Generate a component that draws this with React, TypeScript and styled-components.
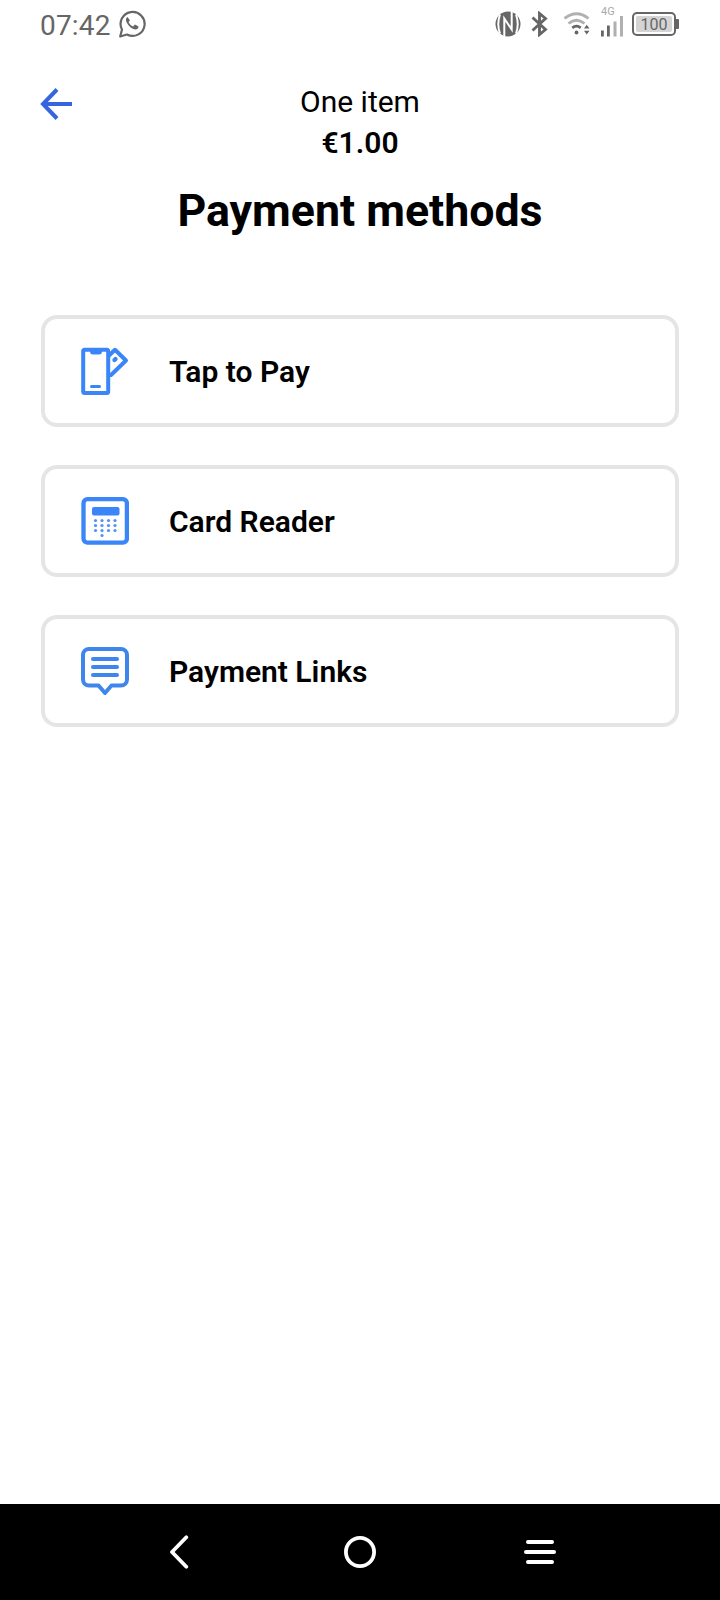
import React from "react";
import styled, { createGlobalStyle } from "styled-components";

const GlobalStyle = createGlobalStyle`
  * { box-sizing: border-box; }
  body { margin: 0; background: #fff; font-family: Roboto, "Liberation Sans", sans-serif; }
`;

const Screen = styled.div`
  width: 720px;
  height: 1600px;
  display: flex;
  flex-direction: column;
  background: #fff;
  color: #000;
`;

const StatusBar = styled.div`
  height: 48px;
  flex: none;
  display: flex;
  justify-content: space-between;
  padding: 0 41px 0 40px;
  color: #666;
`;

const StatusGroup = styled.div`
  display: flex;
  align-items: center;
`;

const Clock = styled.span`
  font-size: 28px;
  line-height: 48px;
  padding-top: 4px;
  width: 77px;
  letter-spacing: 0.2px;
`;

const Glyph = styled.svg<{ $gap?: number }>`
  display: block;
  flex: none;
  margin-left: ${(p) => p.$gap ?? 0}px;
`;

const Signal = styled.div`
  display: flex;
  flex-direction: column;
  align-self: flex-start;
  margin-left: 9px;
  width: 24px;
  color: #aaa;
  padding-top: 7px;
`;

const NetworkLabel = styled.span`
  height: 9px;
  font-size: 11px;
  line-height: 10px;
`;

const Battery = styled.div`
  display: flex;
  align-items: center;
  margin-left: 7px;
  &::after {
    content: "";
    width: 3px;
    height: 10px;
    background: #666;
    border-radius: 0 1px 1px 0;
  }
`;

const BatteryBody = styled.div`
  width: 44px;
  height: 24px;
  border: 2px solid #666;
  border-radius: 5px;
  padding: 2px;
`;

const BatteryLevel = styled.div`
  height: 16px;
  border-radius: 2px;
  background: #d4d4d4;
  font-size: 16px;
  line-height: 17px;
  text-align: center;
`;

const Header = styled.header`
  display: grid;
  grid-template-columns: 120px 1fr 120px;
  padding-top: 34px;
`;

const BackButton = styled.button`
  border: 0;
  background: none;
  padding: 5px 0 0 40px;
  align-self: start;
`;

const Summary = styled.div`
  text-align: center;
  font-size: 30px;
`;

const ItemCount = styled.div`
  font-weight: 400;
  height: 41px;
  line-height: 40px;
`;

const Amount = styled.div`
  font-weight: 600;
  line-height: 40px;
`;

const Title = styled.h1`
  margin: 22px 0 0;
  text-align: center;
  font-size: 44.700px;
  line-height: 52px;
  font-weight: 700;
`;

const Methods = styled.main`
  flex: 1;
  display: flex;
  flex-direction: column;
  gap: 38px;
  padding: 78px 41px 0;
`;

const MethodCard = styled.button`
  height: 112px;
  flex: none;
  display: flex;
  align-items: center;
  gap: 40px;
  padding: 0 36px;
  border: 4px solid #e5e5e5;
  border-radius: 16px;
  background: #fff;
  color: #000;
  font: 600 30px/40px Roboto, "Liberation Sans", sans-serif;
`;

const MethodLabel = styled.span`
  padding-top: 2px;
`;

const NavBar = styled.nav`
  height: 96px;
  flex: none;
  display: grid;
  grid-template-columns: repeat(3, 180px);
  justify-content: center;
  justify-items: center;
  align-items: center;
  background: #000;
`;

const TapIcon = () => (
  <Glyph width="48" height="48" viewBox="0 0 48 48" fill="none" stroke="#3a86f8" strokeWidth="4">
    <rect x="2.200" y="2.800" width="25" height="43.200" rx="1.5" />
    <path d="M9 3h12v1.500a3 3 0 0 1-3 3h-6a3 3 0 0 1-3-3z" fill="#3a86f8" stroke="none" />
    <path d="M10.500 39.500h8" strokeWidth="3" strokeLinecap="round" />
    <path d="M27 9.5L34 2.8L45 13.5L30 28H27" strokeLinejoin="round" />
    <path d="M33.5 13l1-1" strokeWidth="4.4" strokeLinecap="round" />
  </Glyph>
);

const dots = [0, 1, 2].flatMap((r) => [0, 1, 2, 3].map((c) => [14.500 + c * 6.5, 23.5 + r * 5]));

const ReaderIcon = () => (
  <Glyph width="48" height="48" viewBox="0 0 48 48" fill="#3a86f8">
    <rect x="2.500" y="2.200" width="43.400" height="43.400" rx="4" fill="none" stroke="#3a86f8" strokeWidth="4.300" />
    <rect x="11" y="10" width="27.500" height="8.5" rx="2" />
    {[...dots, [21, 38.5]].map(([x, y]) => (
      <circle key={`${x}-${y}`} cx={x} cy={y} r="1.6" opacity="0.9" />
    ))}
  </Glyph>
);

const LinksIcon = () => (
  <Glyph width="48" height="48" viewBox="0 0 48 48" fill="none" stroke="#3f86ec" strokeWidth="4" strokeLinecap="round" strokeLinejoin="round">
    <path d="M8 2h32a6 6 0 0 1 6 6v24.500a6 6 0 0 1-6 6h-9.500L24 46l-6.500-7.500H8a6 6 0 0 1-6-6V8a6 6 0 0 1 6-6z" />
    <path d="M12 12h24M12 20h24M12 28h24" />
  </Glyph>
);

const methods = [
  { label: "Tap to Pay", Icon: TapIcon },
  { label: "Card Reader", Icon: ReaderIcon },
  { label: "Payment Links", Icon: LinksIcon },
];

export default function App() {
  return (
    <Screen>
      <GlobalStyle />
      <StatusBar>
        <StatusGroup>
          <Clock>07:42</Clock>
          <Glyph $gap={1} width="28" height="30" viewBox="0 0 28 30" fill="none" stroke="#666" strokeWidth="2.2">
            <path d="M2.200 27.500l1.800-7A12 12 0 1 1 9 25.500z" strokeLinejoin="round" />
            <path d="M9.500 8c-2 1-2 3.500-.5 6 2 3.500 5 6 8 6.500 2 .2 3.500-1 3.500-3l-3.500-2-2 2c-2-1-3.500-2.500-4.500-4.500l1.500-1.500z" fill="#666" stroke="none" />
          </Glyph>
        </StatusGroup>
        <StatusGroup>
          <Glyph width="26" height="26" viewBox="0 0 26 26">
            <circle cx="13" cy="13" r="12.500" fill="#666" />
            <path d="M5 3.500q-3.500 9.500 0 19M9.300 25V7.500L16.700 18.500V1M21 3.500q3.500 9.500 0 19" fill="none" stroke="#fff" strokeWidth="2" />
          </Glyph>
          <Glyph $gap={10} width="18" height="26" viewBox="0 0 18 26" fill="none" stroke="#666" strokeWidth="2.900">
            <path d="M1.500 6.500l13 12L8.500 23.500V2.500l6 5-13 12" />
          </Glyph>
          <Glyph $gap={15} width="28" height="26" viewBox="0 0 28 26" fill="none" strokeWidth="2.800">
            <path d="M0.500 7.500Q12.500 -2 24.500 7.500M4.500 12.500Q12.500 6 20.500 12.500" stroke="#b0b0b0" />
            <path d="M8.300 16.800Q12.500 13.500 16.700 16.800" stroke="#666" />
            <path d="M20 17.500h5.500l-2.750-3.800zM20 19.700h5.500l-2.750 3.800z" fill="#666" />
            <circle cx="12.500" cy="21.500" r="1.900" fill="#666" />
          </Glyph>
          <Signal>
            <NetworkLabel>4G</NetworkLabel>
            <svg width="24" height="22" viewBox="0 0 24 22">
              <path d="M0 14.500h2.800v6H0zM6 9.500h2.800v11H6z" fill="#666" />
              <path d="M12.500 5.500h3v15h-3zM19 0h3v20.500h-3z" fill="#b0b0b0" />
            </svg>
          </Signal>
          <Battery>
            <BatteryBody>
              <BatteryLevel>100</BatteryLevel>
            </BatteryBody>
          </Battery>
        </StatusGroup>
      </StatusBar>
      <Header>
        <BackButton aria-label="Back">
          <Glyph width="34" height="34" viewBox="0 0 34 34" fill="none" stroke="#3566e0" strokeWidth="4">
            <path d="M17 2.500L3 17l14 14.500M3 17h29" />
          </Glyph>
        </BackButton>
        <Summary>
          <ItemCount>One item</ItemCount>
          <Amount>€1.00</Amount>
        </Summary>
      </Header>
      <Title>Payment methods</Title>
      <Methods>
        {methods.map(({ label, Icon }) => (
          <MethodCard key={label}>
            <Icon />
            <MethodLabel>{label}</MethodLabel>
          </MethodCard>
        ))}
      </Methods>
      <NavBar>
        <Glyph width="32" height="34" viewBox="0 0 32 34" fill="none" stroke="#fff" strokeWidth="3.800" strokeLinecap="round" strokeLinejoin="round">
          <path d="M22.300 2.300L8 17l14.300 14.700" />
        </Glyph>
        <Glyph width="32" height="32" viewBox="0 0 32 32" fill="none" stroke="#fff" strokeWidth="3.800">
          <circle cx="16" cy="16" r="14.100" />
        </Glyph>
        <Glyph width="32" height="32" viewBox="0 0 32 32" fill="none" stroke="#fff" strokeWidth="4" strokeLinecap="round">
          <path d="M4 6h24M2 16h28M4 26h24" />
        </Glyph>
      </NavBar>
    </Screen>
  );
}
